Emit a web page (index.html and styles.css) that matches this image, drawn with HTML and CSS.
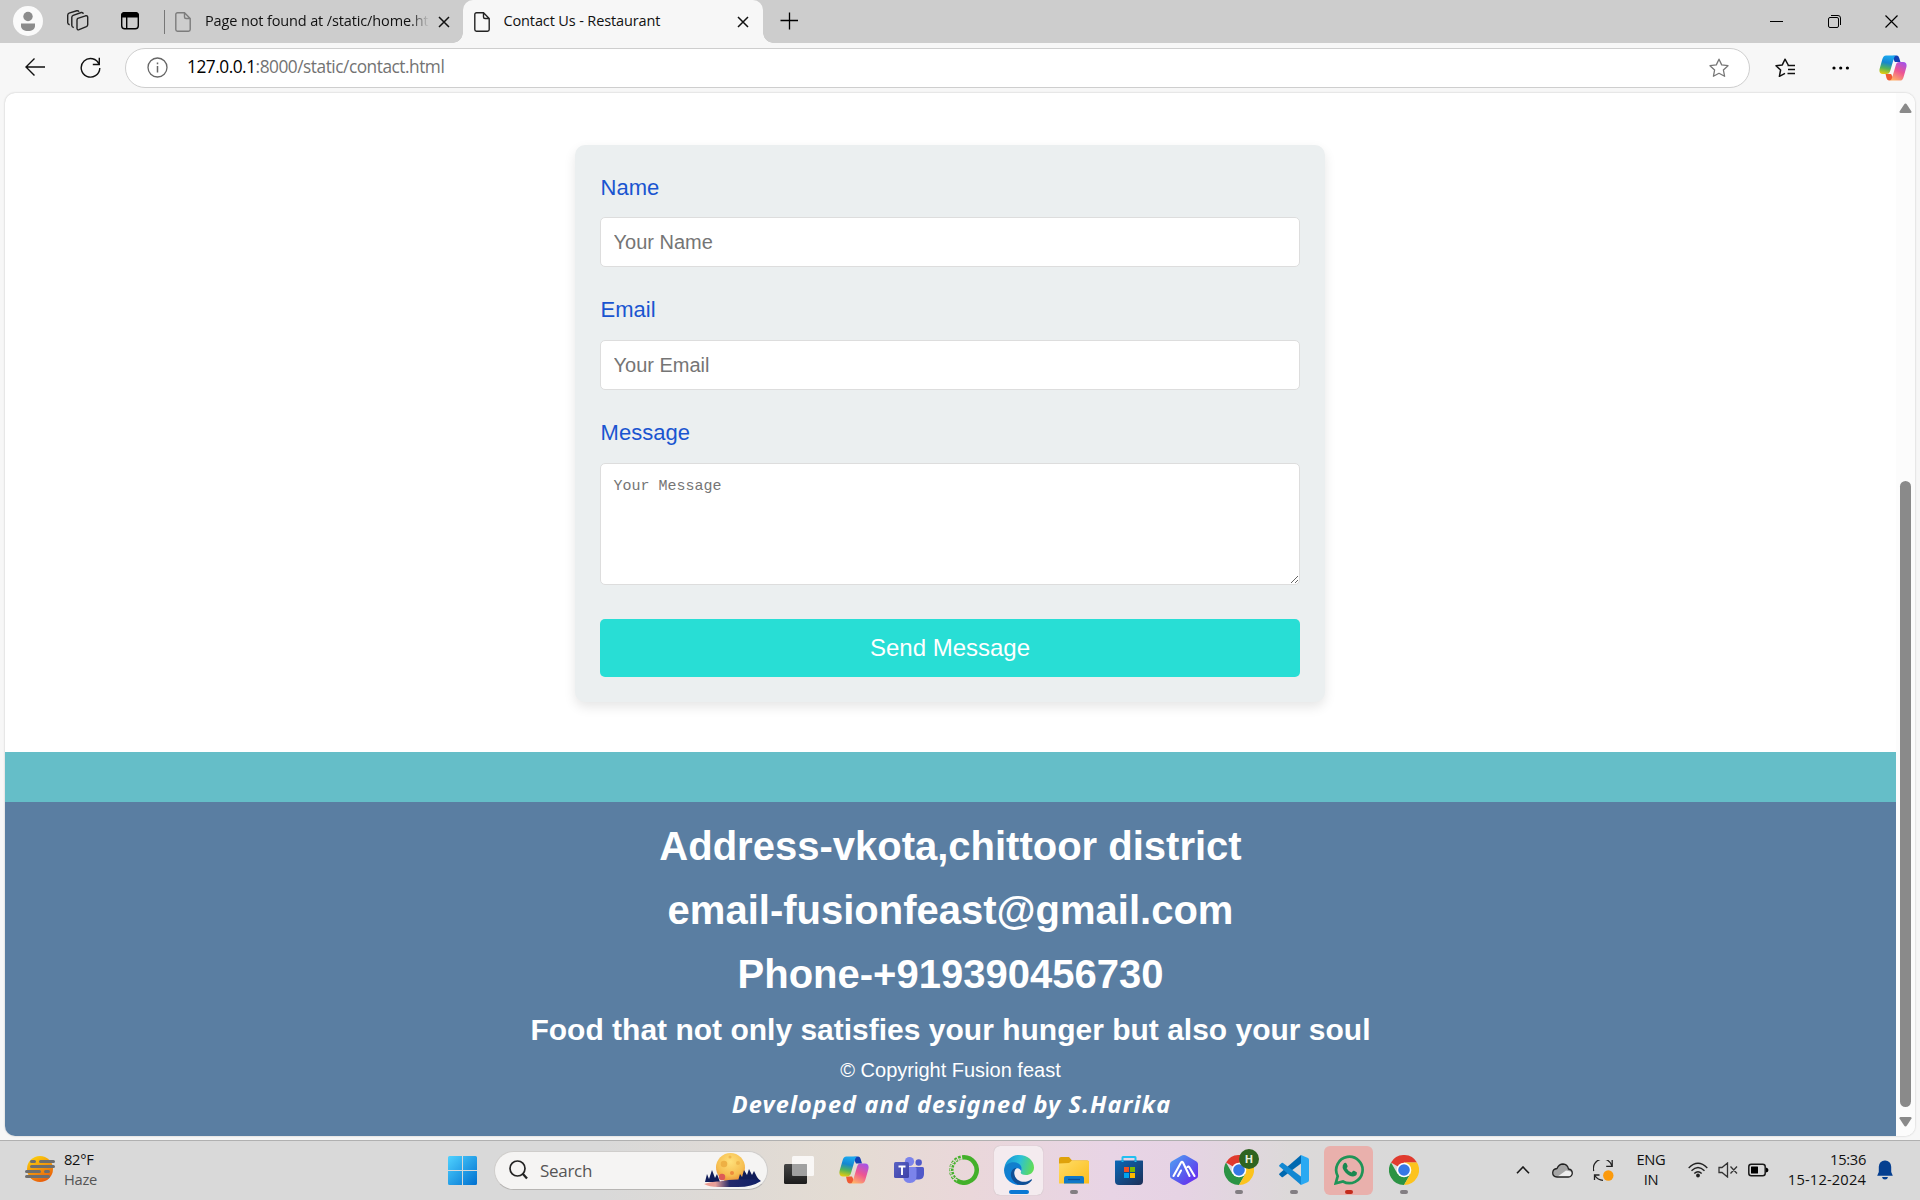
FILE: index.html
```html
<!DOCTYPE html>
<html lang="en">
<head>
<meta charset="utf-8">
<title>Contact Us - Restaurant</title>
<link rel="stylesheet" href="styles.css">
</head>
<body>
<svg class="defs" width="0" height="0">
  <defs>
    <linearGradient id="cpL" x1="0.3" y1="0" x2="0.1" y2="1"><stop offset="0" stop-color="#1aa7ee"/><stop offset=".35" stop-color="#1586d0"/><stop offset=".65" stop-color="#52b35a"/><stop offset="1" stop-color="#f7cf05"/></linearGradient>
    <linearGradient id="cpR" x1=".8" y1="0" x2=".3" y2="1"><stop offset="0" stop-color="#a453e8"/><stop offset=".5" stop-color="#ee5592"/><stop offset="1" stop-color="#ffb067"/></linearGradient>
    <linearGradient id="win" x1="0" y1="0" x2="1" y2="1"><stop offset="0" stop-color="#4fd2ff"/><stop offset="1" stop-color="#0070d0"/></linearGradient>
    <linearGradient id="sun" x1=".2" y1="0" x2=".7" y2="1"><stop offset="0" stop-color="#fcd20c"/><stop offset="1" stop-color="#e8590c"/></linearGradient>
    <linearGradient id="edgeA" x1="0" y1=".3" x2="1" y2=".5"><stop offset="0" stop-color="#1593d8"/><stop offset=".5" stop-color="#2cc0d8"/><stop offset="1" stop-color="#62dd55"/></linearGradient>
    <linearGradient id="edgeB" x1="0" y1="0" x2=".6" y2="1"><stop offset="0" stop-color="#1580c6"/><stop offset="1" stop-color="#0a7ddd"/></linearGradient>
    <linearGradient id="folder" x1="0" y1="0" x2="1" y2="1"><stop offset="0" stop-color="#ffdc67"/><stop offset="1" stop-color="#fbbd1b"/></linearGradient>
    <linearGradient id="store" x1="0" y1="0" x2="1" y2="1"><stop offset="0" stop-color="#0b68b8"/><stop offset="1" stop-color="#1d2f57"/></linearGradient>
    <linearGradient id="hexa" x1="0" y1="0" x2="1" y2="1"><stop offset="0" stop-color="#4ea4f2"/><stop offset=".6" stop-color="#5a55ee"/><stop offset="1" stop-color="#7020f0"/></linearGradient>
    <linearGradient id="teams" x1="0" y1="0" x2="1" y2="1"><stop offset="0" stop-color="#5a62c3"/><stop offset="1" stop-color="#3b40a8"/></linearGradient>
    <radialGradient id="moon" cx=".5" cy=".3" r=".8"><stop offset="0" stop-color="#ffe07a"/><stop offset=".6" stop-color="#f6be50"/><stop offset="1" stop-color="#e8782e"/></radialGradient>
    <linearGradient id="lake"><stop offset="0" stop-color="#f09a8c"/><stop offset=".2" stop-color="#e7a09a"/><stop offset=".45" stop-color="#23296b"/><stop offset="1" stop-color="#101f66"/></linearGradient>
    <linearGradient id="dark" x1="0" y1="0" x2="0" y2="1"><stop offset="0" stop-color="#454545"/><stop offset="1" stop-color="#1c1c1c"/></linearGradient>
    <symbol id="copilot" viewBox="0 0 30 28">
      <path d="M19 .5c1.500 0 2.300 1.200 2.800 3L23 7.500h-6L14 1z" fill="#1340b4"/>
      <path d="M11 27.500c-1.800 0-2.600-1.300-3.100-3L7 20.500h6l3 6z" fill="#ef5b33"/>
      <path d="M7.500.5H19c-1.600 0-2.500 1.300-3.100 3.300l-3.800 13c-.8 2.700-1.800 3.700-4.100 3.700H4C.8 20.500-.2 18 .7 14.600L3.500 4.700C4.300 1.800 5.400.5 7.500.5z" fill="url(#cpL)"/>
      <path d="M22.500 27.500H11c1.600 0 2.500-1.300 3.100-3.300l3.800-13c.8-2.700 1.800-3.700 4.100-3.700h4c3.200 0 4.200 2.500 3.300 5.900l-2.800 9.900c-.8 2.900-1.900 4.200-4 4.200z" fill="url(#cpR)"/>
    </symbol>
    <symbol id="file" viewBox="0 0 16 20">
      <path d="M2.500 .8h7l5.700 5.700v11a1.700 1.700 0 0 1-1.700 1.700h-11A1.700 1.700 0 0 1 .8 17.500v-15A1.700 1.700 0 0 1 2.500 .8zM9.500 .8v4.200a1.500 1.500 0 0 0 1.500 1.500h4.200" fill="none" stroke="currentColor" stroke-width="1.400"/>
    </symbol>
    <symbol id="cross" viewBox="0 0 12 12"><path d="M1 1l10 10M11 1L1 11" stroke="currentColor" stroke-width="1.500" fill="none"/></symbol>
    <symbol id="chrome" viewBox="0 0 30 30">
      <path d="M15 15L2 7.500A15 15 0 0 1 28 7.500H15z" fill="#e03a2e"/>
      <path d="M15 15L21.500 18.750 15 30A15 15 0 0 1 2 7.500L8.500 18.750z" fill="#2b9344"/>
      <path d="M15 7.500H28A15 15 0 0 1 15 30L21.500 18.750z" fill="#fcc31e"/>
      <circle cx="15" cy="15" r="7.300" fill="#fff"/><circle cx="15" cy="15" r="5.800" fill="#3578e5"/>
    </symbol>
  </defs>
</svg>

<header class="tabstrip">
  <svg class="avatar" width="30" height="30"><circle cx="15" cy="15" r="15" fill="#fafafa"/><circle cx="15" cy="10.500" r="4.700" fill="#8c8c8c"/><path d="M8 17.500h14v2.500c0 3-3 5-7 5s-7-2-7-5z" fill="#8c8c8c"/></svg>
  <svg class="workspaces" width="22" height="22" fill="none" stroke="#222" stroke-width="1.400"><path d="M10.800 8.300l7.700-2.500q2-.5 2.200 1.300v7.700q0 1.300-1.300 1.900l-7.300 3q-1.900 .6-2.100-1.200v-8.300q0-1.400 .8-1.900zM6.800 17.500q-1.900-.2-2-2V7.300q.1-1.500 1.400-2l8-2.800q1.700-.4 2.200 1.200M2.700 14.700Q.8 14.300.7 12.700V5.200q.1-1.500 1.400-2L9.700 .8q1.700-.3 2.300 .9"/></svg>
  <svg class="tab-actions" width="20" height="20"><rect x="1.700" y="1.700" width="16.600" height="16" rx="3" fill="none" stroke="#000" stroke-width="1.400"/><path d="M1 5a4 4 0 0 1 4-4h10a4 4 0 0 1 4 4v1.500H1z"/><path d="M6.700 6v12" stroke="#000" stroke-width="1.400"/></svg>
  <div class="tab">
    <svg class="tab-icon" width="16" height="20"><use href="#file"/></svg>
    <span class="tab-title faded">Page not found at /static/home.html</span>
    <svg class="tab-close" width="12" height="12"><use href="#cross"/></svg>
  </div>
  <div class="tab active">
    <svg class="tab-icon" width="16" height="20"><use href="#file"/></svg>
    <span class="tab-title">Contact Us - Restaurant</span>
    <svg class="tab-close" width="12" height="12"><use href="#cross"/></svg>
  </div>
  <svg class="new-tab" width="18" height="18"><path d="M9.500 .5v17M.5 8.500h17.500" stroke="#000" stroke-width="1.300"/></svg>
  <div class="window-buttons">
    <svg width="13" height="13"><path d="M0 6.500h13" stroke="#000"/></svg>
    <svg width="13" height="13" fill="none" stroke="#000"><rect x=".5" y="2.500" width="10" height="10" rx="1.500"/><path d="M3 .5h7q2.500 0 2.500 2.500v7"/></svg>
    <svg width="13" height="13"><path d="M.5 .5l12 12M12.500 .5l-12 12" stroke="#000" stroke-width="1.200"/></svg>
  </div>
</header>

<nav class="toolbar">
  <svg width="20" height="20" fill="none" stroke="#111" stroke-width="1.400"><path d="M20 10H1M9.500 1.500L1 10l8.500 8.500"/></svg>
  <svg class="reload" width="21" height="21" fill="none" stroke="#111" stroke-width="1.400"><path d="M19.200 7.500A9.300 9.300 0 1 0 19.800 11M19.300 .8v6.700h-6.500"/></svg>
  <div class="address">
    <svg width="21" height="21" fill="none" stroke="#666" stroke-width="1.300"><circle cx="10.500" cy="10.500" r="9.500"/><path d="M10.500 9v6.500M10.500 5.500v1.800" stroke-width="1.500"/></svg>
    <span class="url"><b>127.0.0.1</b>:8000/static/contact.html</span>
    <svg class="star" width="20" height="20" fill="none" stroke="#777" stroke-width="1.300"><path d="M10 1.200l2.700 5.700 6.300 .8-4.600 4.300 1.200 6.300L10 15.300l-5.600 3 1.200-6.300L1 7.700l6.300-.8z" stroke-linejoin="round"/></svg>
  </div>
  <svg class="favorites" width="20" height="20" fill="none" stroke="#111" stroke-width="1.500"><path d="M19 7.500h-5.500L10 1.200 7.300 6.900 1 7.700 5.600 12 4.400 18.300 10 15.300M12.500 7.600H20M13 11.500h7M12.500 15.400H20" stroke-linejoin="round"/></svg>
  <svg class="more" width="18" height="4"><circle cx="2" cy="2" r="1.600"/><circle cx="8.700" cy="2" r="1.600"/><circle cx="15.400" cy="2" r="1.600"/></svg>
  <svg class="copilot-button" width="28" height="26"><use href="#copilot"/></svg>
</nav>

<div class="viewport">
  <main class="page">
    <form class="card">
      <label class="field"><span>Name</span><input type="text" placeholder="Your Name"></label>
      <label class="field"><span>Email</span><input type="email" placeholder="Your Email"></label>
      <label class="field"><span>Message</span><textarea placeholder="Your Message"></textarea></label>
      <button type="button">Send Message</button>
    </form>
    <div class="band"></div>
    <footer class="footer">
      <h1>Address-vkota,chittoor district</h1>
      <h1>email-fusionfeast@gmail.com</h1>
      <h1>Phone-+919390456730</h1>
      <h2>Food that not only satisfies your hunger but also your soul</h2>
      <p>© Copyright Fusion feast</p>
      <p class="credit">Developed and designed by S.Harika</p>
    </footer>
  </main>
  <div class="scrollbar">
    <svg width="13" height="10"><path d="M6.500 .5q.8 0 1.400 .9l4.600 7q.4 1.400-1 1.600h-10q-1.400-.2-1-1.600l4.600-7q.6-.9 1.400-.9z" fill="#8a8a8a"/></svg>
    <div class="thumb"></div>
    <svg width="13" height="10"><path d="M6.500 9.500q-.8 0-1.400-.9l-4.600-7Q.1 .2 1.500 0h10q1.400 .2 1 1.600l-4.600 7q-.6 .9-1.400 .9z" fill="#8a8a8a"/></svg>
  </div>
</div>

<footer class="taskbar">
  <div class="weather">
    <svg width="30" height="26"><circle cx="15" cy="13" r="13" fill="url(#sun)"/><path d="M6.500 5.500h3M15.500 5.500h13M6.500 10.500h22M1.500 15.500h13M20.500 15.500h3M1.500 20.500h22" stroke="#6e6e6e" stroke-width="3" stroke-linecap="round"/></svg>
    <div class="stack"><span>82°F</span><span class="muted">Haze</span></div>
  </div>
  <svg class="start" width="29" height="29"><path d="M0 1.500Q0 0 1.500 0H14v14H0zM15 0h12.500Q29 0 29 1.500V14H15zM0 15h14v14H1.500Q0 29 0 27.500zM15 15h14v12.500q0 1.500-1.500 1.500H15z" fill="url(#win)"/></svg>
  <div class="search">
    <svg width="19" height="20" fill="none" stroke="#222"><circle cx="8.500" cy="8.500" r="7.500" stroke-width="1.700"/><path d="M13.500 13.500l4.500 5" stroke-width="2.300"/></svg>
    <span>Search</span>
    <svg class="moon" width="57" height="34"><circle cx="26.500" cy="14.500" r="14.500" fill="url(#moon)"/><circle cx="20" cy="11" r="3.300" fill="#eeb044"/><circle cx="34" cy="10" r="2" fill="#f0b74e"/><circle cx="26" cy="4" r="1.500" fill="#f0b74e"/><circle cx="28" cy="20" r="2" fill="#ee8b3c"/><circle cx="18" cy="24" r="3.200" fill="#dd5b56"/><path d="M1 29l2-8 2 5 3-9 3 8 2-4 3 8zM34 28l2-7 2 3 2-7 3 5 2-6 3 6 2-4 3 6 3 4z" fill="#101c58"/><path d="M0 31q8-3 15-2.500Q26 26 38 26.500h17l2 1.500q-9 6-23 6H14q-9 0-14-3z" fill="url(#lake)"/></svg>
  </div>
  <div class="apps">
    <div class="slot"><svg width="30" height="30"><rect x="0" y="9" width="23" height="20" rx="1.500" fill="url(#dark)"/><rect x="8" y="1" width="22" height="20" rx="1.500" fill="#fff" opacity=".78"/><path d="M8 9h15v12H8z" fill="#777" opacity=".55"/></svg></div>
    <div class="slot"><svg width="30" height="28"><use href="#copilot"/></svg></div>
    <div class="slot"><svg width="30" height="30"><circle cx="15.500" cy="6.500" r="4.600" fill="#7b83eb"/><circle cx="24.700" cy="7.500" r="3.200" fill="#5059c9"/><path d="M19 12h9.500q1.500 0 1.500 1.500V19q0 5-5 5.500h-4z" fill="#5059c9"/><path d="M9 12h12q1.500 0 1.500 1.500V21q0 7-6.500 7-6 0-7-6z" fill="#7b83eb"/><rect x="0" y="7" width="15" height="16" rx="1.500" fill="url(#teams)"/><path d="M4.500 11.500h7M8 11.500V20" stroke="#fff" stroke-width="1.900"/></svg></div>
    <div class="slot"><svg width="30" height="30" fill="none" stroke="#43b02a"><path d="M15 2.300A12.700 12.700 0 1 1 8 25.600" stroke-width="4.500"/><path d="M8 25.600A12.700 12.700 0 0 1 15 2.300" stroke-width="4.500" stroke-dasharray="2.500 1.300"/><path d="M8 25A11 11 0 0 1 14 4" stroke="#e6dad5" stroke-width="1.400" stroke-dasharray="2 2"/></svg></div>
    <div class="slot current"><svg width="30" height="30"><path d="M.5 12C2 5 8 0 15 0c9 0 15 6 15 12.500 0 5-4 7.500-8 7.500-4.500 0-6-1.800-5-3.300 2-3-1-7.700-6-7.700C6 9 2 11 .5 15z" fill="url(#edgeA)"/><path d="M0 15C1 9 6 7 10 7.200c6 .3 9 5 7.300 9.300C15 11 10 13 10 18c0 5 4 9.500 8 11.700A15 15 0 0 1 0 15z" fill="url(#edgeB)"/><path d="M12.500 12.800C9 16 9.500 22 14 25c4 2.600 9 2.500 13-.5.800-.6 1.200 0 .7.900C24 30.500 18 30.500 15 29.500 8 27.500 5 20 8 15.500c1.200-1.800 3-2.700 4.500-2.700z" fill="#104f96"/></svg><i class="dot wide"></i></div>
    <div class="slot"><svg width="30" height="30"><path d="M0 4q0-2 2-2h8l3 3.500h15q2 0 2 2V12H0z" fill="#dfa20b"/><path d="M0 8.500L10 8l3-2.500h15.500Q30 5.500 30 7v21.500H0z" fill="url(#folder)"/><path d="M5 28.500V23q0-2 2-2h16q2 0 2 2v5.500z" fill="#0f78c8"/><path d="M9 24.500h12" stroke="#0a4f96" stroke-width="1.300"/></svg><i class="dot"></i></div>
    <div class="slot"><svg width="30" height="30"><path d="M8.500 7V2.500Q8.500 2 9 2h12q.5 0 .5 .5V7" fill="none" stroke="#22bff0" stroke-width="2"/><path d="M1.500 5.500h27q.5 0 .5 .5v20q0 4-4 4H5q-4 0-4-4V6q0-.5 .5-.5z" fill="url(#store)"/><path d="M8.500 5.500V7M21.500 5.500V7" stroke="#22bff0" stroke-width="2"/><path d="M10 12h5v5h-5z" fill="#f25022"/><path d="M16 12h5v5h-5z" fill="#7fba00"/><path d="M10 18h5v5h-5z" fill="#00a4ef"/><path d="M16 18h5v5h-5z" fill="#ffb900"/></svg></div>
    <div class="slot"><svg width="30" height="30"><path d="M15 0q1.500 0 3 1l9.500 5.500Q29 7.500 29 9v12q0 1.500-1.500 2.500L18 29q-3 2-6 0l-9.500-5.500Q1 22.500 1 21V9q0-1.500 1.500-2.500L12 1q1.500-1 3-1z" fill="url(#hexa)"/><path d="M4.500 21L12 7.500q1-1.500 2 0L20.500 21M9 21l3-5.500M18.500 12q1-1 2 .5L25.500 21" fill="none" stroke="#fff" stroke-width="2.100" stroke-linecap="round"/></svg></div>
    <div class="slot"><svg width="30" height="30"><use href="#chrome"/></svg><em class="badge">H</em><i class="dot"></i></div>
    <div class="slot"><svg width="30" height="30"><path d="M22 0L29 3q1 .5 1 2v20q0 1.500-1 2l-7 3z" fill="#2aa9f2"/><path d="M22 0v8.500L4 22q-.7 .5-1.400 0L.5 20q-.8-.8 0-1.600z" fill="#0069b0"/><path d="M22 30v-8.500L4 8q-.7-.5-1.400 0L.5 10q-.8 .8 0 1.600z" fill="#1288d2"/></svg><i class="dot"></i></div>
    <div class="slot alert"><svg width="30" height="30"><path d="M1.700 28.300l2-7.200A13.200 13.200 0 1 1 9 26.500z" fill="none" stroke="#1f9457" stroke-width="2.700"/><path d="M9.800 8.500q1-1 2.300-.5.600.3 1.500 3 .2.800-1 2.200 1.600 3.200 5 4.300l1.300-1.500q.5-.6 1.200-.2l2.700 1.400q.7 3.800-3.700 4.200-3.600.2-7.700-4-4.700-5.200-1.600-8.900z" fill="#1a8850"/></svg><i class="dot red"></i></div>
    <div class="slot"><svg width="30" height="30"><use href="#chrome"/></svg><i class="dot"></i></div>
  </div>
  <div class="tray">
    <svg width="14" height="8"><path d="M1 7.300L7 1l6 6.300" fill="none" stroke="#1a1a1a" stroke-width="1.600"/></svg>
    <svg class="cloud" width="21" height="15"><path d="M5 14q-4.300-.3-4.300-4.300Q.8 6 5 5.500 7 1 11 1q4.500 .2 5.500 5 3.800 .5 3.800 4.200-.3 3.500-4 3.800z" fill="#a5a5a5"/><path d="M5 14l9-6.500q6 .5 6 3-.5 3.300-4 3.500z" fill="#eee"/><path d="M5 14q-4.300-.3-4.300-4.300Q.8 6 5 5.500 7 1 11 1q4.500 .2 5.500 5 3.800 .5 3.800 4.200-.3 3.500-4 3.800z" fill="none" stroke="#222" stroke-width="1.300"/></svg>
    <svg class="sync" width="21" height="21" fill="none" stroke="#222" stroke-width="1.300"><path d="M.7 11A9.300 9.300 0 0 1 19 6M19.200 0v6.300h-6M1.500 20v-5h5M1.700 15.500q3 4.500 8.300 4.800"/><circle cx="15.300" cy="15.500" r="5.200" fill="#fb9a0c" stroke="none"/></svg>
    <div class="stack lang"><span>ENG</span><span>IN</span></div>
    <svg class="wifi" width="20" height="16" fill="none" stroke="#222" stroke-width="1.400"><path d="M.7 6q9.300-9.300 18.600 0M3.500 8.800q6.500-6.500 13 0M6.300 11.600q3.700-3.700 7.400 0"/><circle cx="10" cy="13.500" r="1.200" fill="#222"/></svg>
    <svg class="volume" width="20" height="16" fill="none" stroke="#333" stroke-width="1.300"><path d="M1 5.500h3L9.500 1v14L4 10.500H1zM12.500 4.500l6.500 7M19 4.500l-6.500 7"/></svg>
    <svg class="battery" width="21" height="14"><rect x=".8" y="1.300" width="16.400" height="11.400" rx="2.500" fill="none" stroke="#1a1a1a" stroke-width="1.500"/><rect x="3" y="3.500" width="7" height="7" rx=".5"/><path d="M18 4.500q2.500 .5 2.500 2.500T18 9.500z"/></svg>
    <div class="stack clock"><span>15:36</span><span class="date">15-12-2024</span></div>
    <svg class="bell" width="16" height="20"><path d="M8 .5a6 6 0 0 1 6.200 6.200V12l1.600 3.700H.2L1.800 12V6.700A6 6 0 0 1 8 .5zM5 17h6q-.5 2.500-3 2.500T5 17z" fill="#053f90"/></svg>
  </div>
</footer>
</body>
</html>
```
FILE: styles.css
```css
* { box-sizing: border-box; }
body {
  margin: 0;
  width: 1920px;
  height: 1200px;
  overflow: hidden;
  display: flex;
  flex-direction: column;
  background: #f7f7f7;
  font-family: "Open Sans", "Noto Sans", sans-serif;
  color: #111;
}
svg { flex: none; display: block; }
.defs { position: absolute; }

/* Tab strip */
.tabstrip {
  height: 43px;
  flex: none;
  display: flex;
  align-items: center;
  padding: 0 22px 1px 13px;
  background: #cdcdcd;
}
.workspaces { margin-left: 24px; }
.tab-actions { margin-left: 31px; }
.tab {
  width: 298px;
  height: 43px;
  display: flex;
  align-items: center;
  align-self: flex-start;
  padding: 0 13px 0 10px;
  position: relative;
}
.tab:not(.active) { margin-left: 25px; }
.tab:not(.active)::before {
  content: "";
  position: absolute;
  left: -1px;
  top: 10px;
  width: 1px;
  height: 24px;
  background: #777;
}
.tab-icon { color: #7c7c7c; }
.active .tab-icon { color: #222; }
.tab-title {
  margin-left: 14px;
  padding-bottom: 2px;
  width: 224px;
  font-size: 14.5px;
  letter-spacing: -.13px;
  line-height: 20px;
  white-space: nowrap;
  overflow: hidden;
}
.active .tab-title { margin-left: 13.500px; }
.faded {
  -webkit-mask-image: linear-gradient(90deg, #000 205px, transparent 224px);
  mask-image: linear-gradient(90deg, #000 205px, transparent 224px);
}
.tab-close { margin-left: auto; }
.active {
  width: 300px;
  padding: 0 14px 0 11px;
  background: #f7f7f7;
  border-radius: 10px 10px 0 0;
}
.active::before, .active::after {
  content: "";
  position: absolute;
  bottom: 0;
  width: 10px;
  height: 10px;
}
.active::before { left: -10px; background: radial-gradient(circle at 0 0, transparent 9.500px, #f7f7f7 10px); }
.active::after { right: -10px; background: radial-gradient(circle at 100% 0, transparent 9.500px, #f7f7f7 10px); }
.new-tab { margin-left: 17px; }
.window-buttons { margin-left: auto; display: flex; gap: 44.500px; }

/* Toolbar */
.toolbar {
  height: 50px;
  flex: none;
  display: flex;
  align-items: center;
  padding: 0 13px 1px 25px;
}
.toolbar > svg:first-child { margin-bottom: 1px; }
.reload { margin-left: 34.500px; }
.address {
  width: 1625px;
  height: 40px;
  margin-left: 24.500px;
  padding: 0 20px 0 21px;
  display: flex;
  align-items: center;
  background: #fff;
  border: 1px solid #cecece;
  border-radius: 20px;
}
.url { margin-left: 19px; padding-bottom: 1px; font-size: 17.300px; line-height: 24px; color: #737373; letter-spacing: -.48px; }
.url b { font-weight: 400; color: #000; }
.star { margin-left: auto; }
.favorites { margin-left: 25px; }
.more { margin-left: 36.500px; }
.copilot-button { margin-left: auto; }

/* Web page area */
.viewport {
  width: 1910px;
  height: 1043px;
  flex: none;
  margin-left: 5px;
  display: flex;
  background: #fff;
  border-radius: 10px;
  overflow: hidden;
  box-shadow: 0 0 2px #bbb;
}
.page {
  width: 1891px;
  display: flex;
  flex-direction: column;
  font-family: "Liberation Sans", Arial, sans-serif;
}
.card {
  width: 750px;
  height: 557px;
  margin: 52px 0 50px 570px;
  padding: 25px;
  display: flex;
  flex-direction: column;
  flex: none;
  background: #ebeff0;
  border-radius: 10px;
  box-shadow: 0 5px 12px rgba(0, 0, 0, .1);
}
.field { display: flex; flex-direction: column; margin-bottom: 25px; }
.field span { line-height: 35px; margin-bottom: 13px; padding-left: .6px; font-size: 22px; color: #1a55d0; }
.field:first-child span { margin-bottom: 12px; }
.field input, .field textarea {
  width: 700px;
  height: 50px;
  margin: 0;
  padding: 12.500px;
  border: 1px solid #ddd;
  border-radius: 5px;
  background: #fff;
  font: 20px "Liberation Sans", Arial, sans-serif;
}
.field textarea { height: 122px; padding-top: 13px; font: 15px "Liberation Mono", monospace; line-height: 20px; }
.field ::placeholder { color: #757575; }
.card button {
  height: 58px;
  margin-top: 9px;
  flex: none;
  border: 0;
  border-radius: 5px;
  background: #28ded5;
  color: #fff;
  font: 24px "Liberation Sans", Arial, sans-serif;
}
.band { height: 50px; flex: none; background: #65bec8; }
.footer {
  flex: 1;
  padding-top: 11.500px;
  background: #5a7ea2;
  color: #fff;
  text-align: center;
}
.footer h1, .footer h2, .footer p { margin: 0; }
.footer h1 { font-size: 40px; line-height: 64px; }
.footer h2 { margin-top: 1px; font-size: 30px; line-height: 46px; }
.footer p { font-size: 20px; line-height: 35px; }
.footer .credit { padding-left: 2px; font: italic 700 23.500px/33px "Noto Sans", sans-serif; letter-spacing: 1.100px; }

.scrollbar {
  width: 19px;
  padding: 10px 3px 9px;
  display: flex;
  flex-direction: column;
  align-items: center;
  background: #fcfcfc;
}
.thumb { width: 11px; height: 626px; margin: auto 0 10px; border-radius: 6px; background: #8a8a8a; }

/* Taskbar */
.taskbar {
  height: 60px;
  margin-top: 4px;
  flex: none;
  display: flex;
  align-items: center;
  border-top: 1px solid #b0b0b0;
  background: linear-gradient(90deg, #d9d9d9 600px, #dfdad5 740px, #e4dcd3 850px, #ead7da 970px, #e8d4e5 1110px, #e6d3e4 1180px, #dcd9d9 1290px, #d9d9d9 1400px);
}
.weather { width: 423px; padding: 0 0 3px 25px; display: flex; align-items: center; gap: 9px; }
.stack { display: flex; flex-direction: column; font-size: 14.700px; line-height: 20px; letter-spacing: -.3px; white-space: nowrap; }
.weather .stack { padding-bottom: 1px; }
.muted { color: #555; }
.start { margin-left: 25px; }
.search {
  width: 274px;
  height: 39px;
  margin: 0 0 1px 17px;
  padding: 0 6px 0 14px;
  display: flex;
  align-items: center;
  background: #f5f4f3;
  border: 1px solid #cfcdcb;
  border-bottom-color: #b7b5b3;
  border-radius: 20px;
}
.search span { margin-left: 12px; font-size: 17px; letter-spacing: -.3px; color: #555; }
.moon { margin-left: auto; }
.apps { display: flex; margin-left: 3px; }
.slot {
  width: 55px;
  height: 59px;
  padding-bottom: 1px;
  display: flex;
  align-items: center;
  justify-content: center;
  position: relative;
}
.slot svg { position: relative; }
.current::before, .alert::before {
  content: "";
  position: absolute;
  left: 3px;
  top: 5px;
  width: 49px;
  height: 49px;
  border-radius: 6px;
  background: #f4ebef;
  box-shadow: 0 0 1px #aaa;
}
.alert::before { background: #e9b0ac; box-shadow: none; }
.dot {
  position: absolute;
  left: 23.500px;
  bottom: 6px;
  width: 8px;
  height: 4px;
  border-radius: 2px;
  background: #827e82;
}
.wide { left: 17.500px; width: 20px; background: #0a78d4; }
.red { background: #c42b1c; }
.badge {
  position: absolute;
  left: 28px;
  top: 8px;
  width: 20px;
  height: 20px;
  border-radius: 50%;
  background: #2f6420;
  color: #e8eedf;
  font: 700 11px/20px "Open Sans", sans-serif;
  text-align: center;
}
.tray { margin-left: auto; margin-right: 27px; padding-bottom: 1px; display: flex; align-items: center; }
.tray .stack { padding-bottom: 2px; }
.cloud { margin-left: 22px; }
.sync { margin-left: 20px; }
.lang { width: 50px; margin-left: 12px; align-items: center; }
.wifi { margin-left: 12px; }
.volume { margin-left: 10px; }
.battery { margin-left: 10px; }
.clock { width: 97px; align-items: flex-end; }
.date { letter-spacing: .15px; }
.bell { margin-left: 11px; }
```
